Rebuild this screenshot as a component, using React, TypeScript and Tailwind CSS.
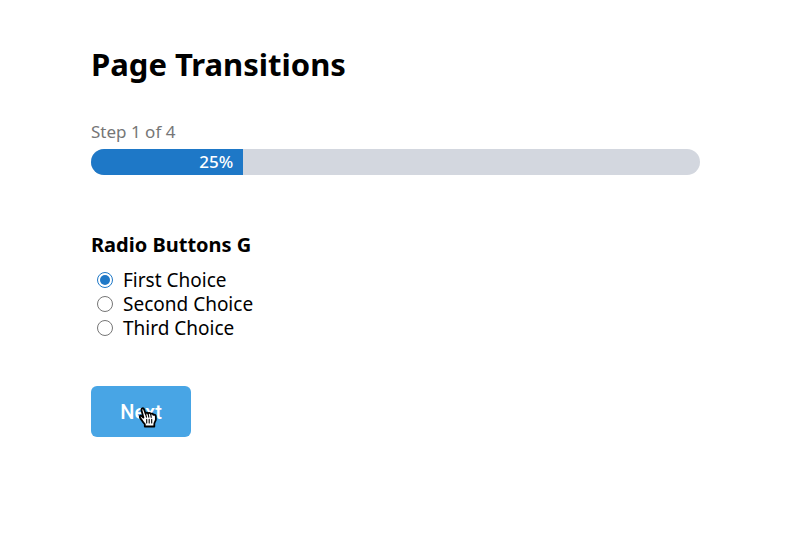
import { useState } from "react";

const STEP = 1;
const TOTAL_STEPS = 4;

const choices = [
  { id: "first", label: "First Choice" },
  { id: "second", label: "Second Choice" },
  { id: "third", label: "Third Choice" },
];

function ProgressBar({ step, total }: { step: number; total: number }) {
  const percent = Math.round((step / total) * 100);

  return (
    <div className="mt-9">
      <p className="text-[17px] leading-6 text-[#767676]">
        Step {step} of {total}
      </p>
      <div
        role="progressbar"
        aria-valuenow={percent}
        aria-valuemin={0}
        aria-valuemax={100}
        className="mt-[5px] h-[26px] overflow-hidden rounded-full bg-[#d3d7df]"
      >
        <div
          className="h-full bg-[#1e78c7] pr-[10px] text-right text-[17px] leading-[26px] font-medium text-white"
          style={{ width: `${percent}%` }}
        >
          {percent}%
        </div>
      </div>
    </div>
  );
}

function HandPointer() {
  return (
    <svg
      viewBox="0 0 18 22"
      className="pointer-events-none absolute top-5 left-12 h-[22px] w-[18px]"
      aria-hidden="true"
    >
      <path
        d="M5.8 20.5v-2.3c-1.3-1.2-2.2-2.7-3.1-4.1L.9 11.6c-.7-1.2.3-2.2 1.4-1.7.8.3 1.4 1 2.1 1.7L2.5 4.3C2 2.2 4.4 1.5 5.1 3.4l1.5 4.4c.2-1.3 2-1.5 2.5-.2.5-1 2.2-.9 2.6.4.7-.8 2.4-.4 2.6.8 1.2-.5 2.4.2 2.5 1.5l.1 2.9c0 1.7-1.5 3-1.6 4.7v2.6H5.8z"
        fill="#fff"
        stroke="#000"
        strokeWidth="1.8"
        strokeLinejoin="round"
      />
      <path
        d="M6.6 8l.9 3.2M9.2 8.2l.6 3M11.8 8.6l.4 2.8M7.7 13.4v3.6M10.2 13.4v3.6M12.7 13.4v3.6"
        fill="none"
        stroke="#000"
        strokeWidth="1.1"
        strokeLinecap="round"
      />
    </svg>
  );
}

export default function App() {
  const [selected, setSelected] = useState("first");

  return (
    <main className="min-h-screen bg-white pt-11 pr-[93px] pl-[91px] font-['Noto_Sans','Open_Sans',sans-serif] text-black">
      <h1 className="text-[31px] leading-10 font-bold">Page Transitions</h1>

      <ProgressBar step={STEP} total={TOTAL_STEPS} />

      <form onSubmit={(e) => e.preventDefault()}>
        <fieldset className="mt-14">
          <legend className="text-xl leading-7 font-bold">Radio Buttons G</legend>
          <div className="mt-[9px] pl-[6px]">
            {choices.map((choice) => (
              <label
                key={choice.id}
                className="flex h-6 w-fit items-center gap-[10px] text-[19px] leading-6"
              >
                <input
                  type="radio"
                  name="choice"
                  value={choice.id}
                  checked={selected === choice.id}
                  onChange={() => setSelected(choice.id)}
                  className="size-4 appearance-none rounded-full border border-[#767676] bg-white bg-clip-content p-[2px] checked:border-[#1e78c7] checked:bg-[#1e78c7]"
                />
                {choice.label}
              </label>
            ))}
          </div>
        </fieldset>

        <div className="relative mt-[46px] w-fit">
          <button
            type="submit"
            className="h-[51px] w-[100px] rounded-md bg-[#48a5e5] font-[Roboto,sans-serif] text-xl font-medium text-white"
          >
            Next
          </button>
          <HandPointer />
        </div>
      </form>
    </main>
  );
}
